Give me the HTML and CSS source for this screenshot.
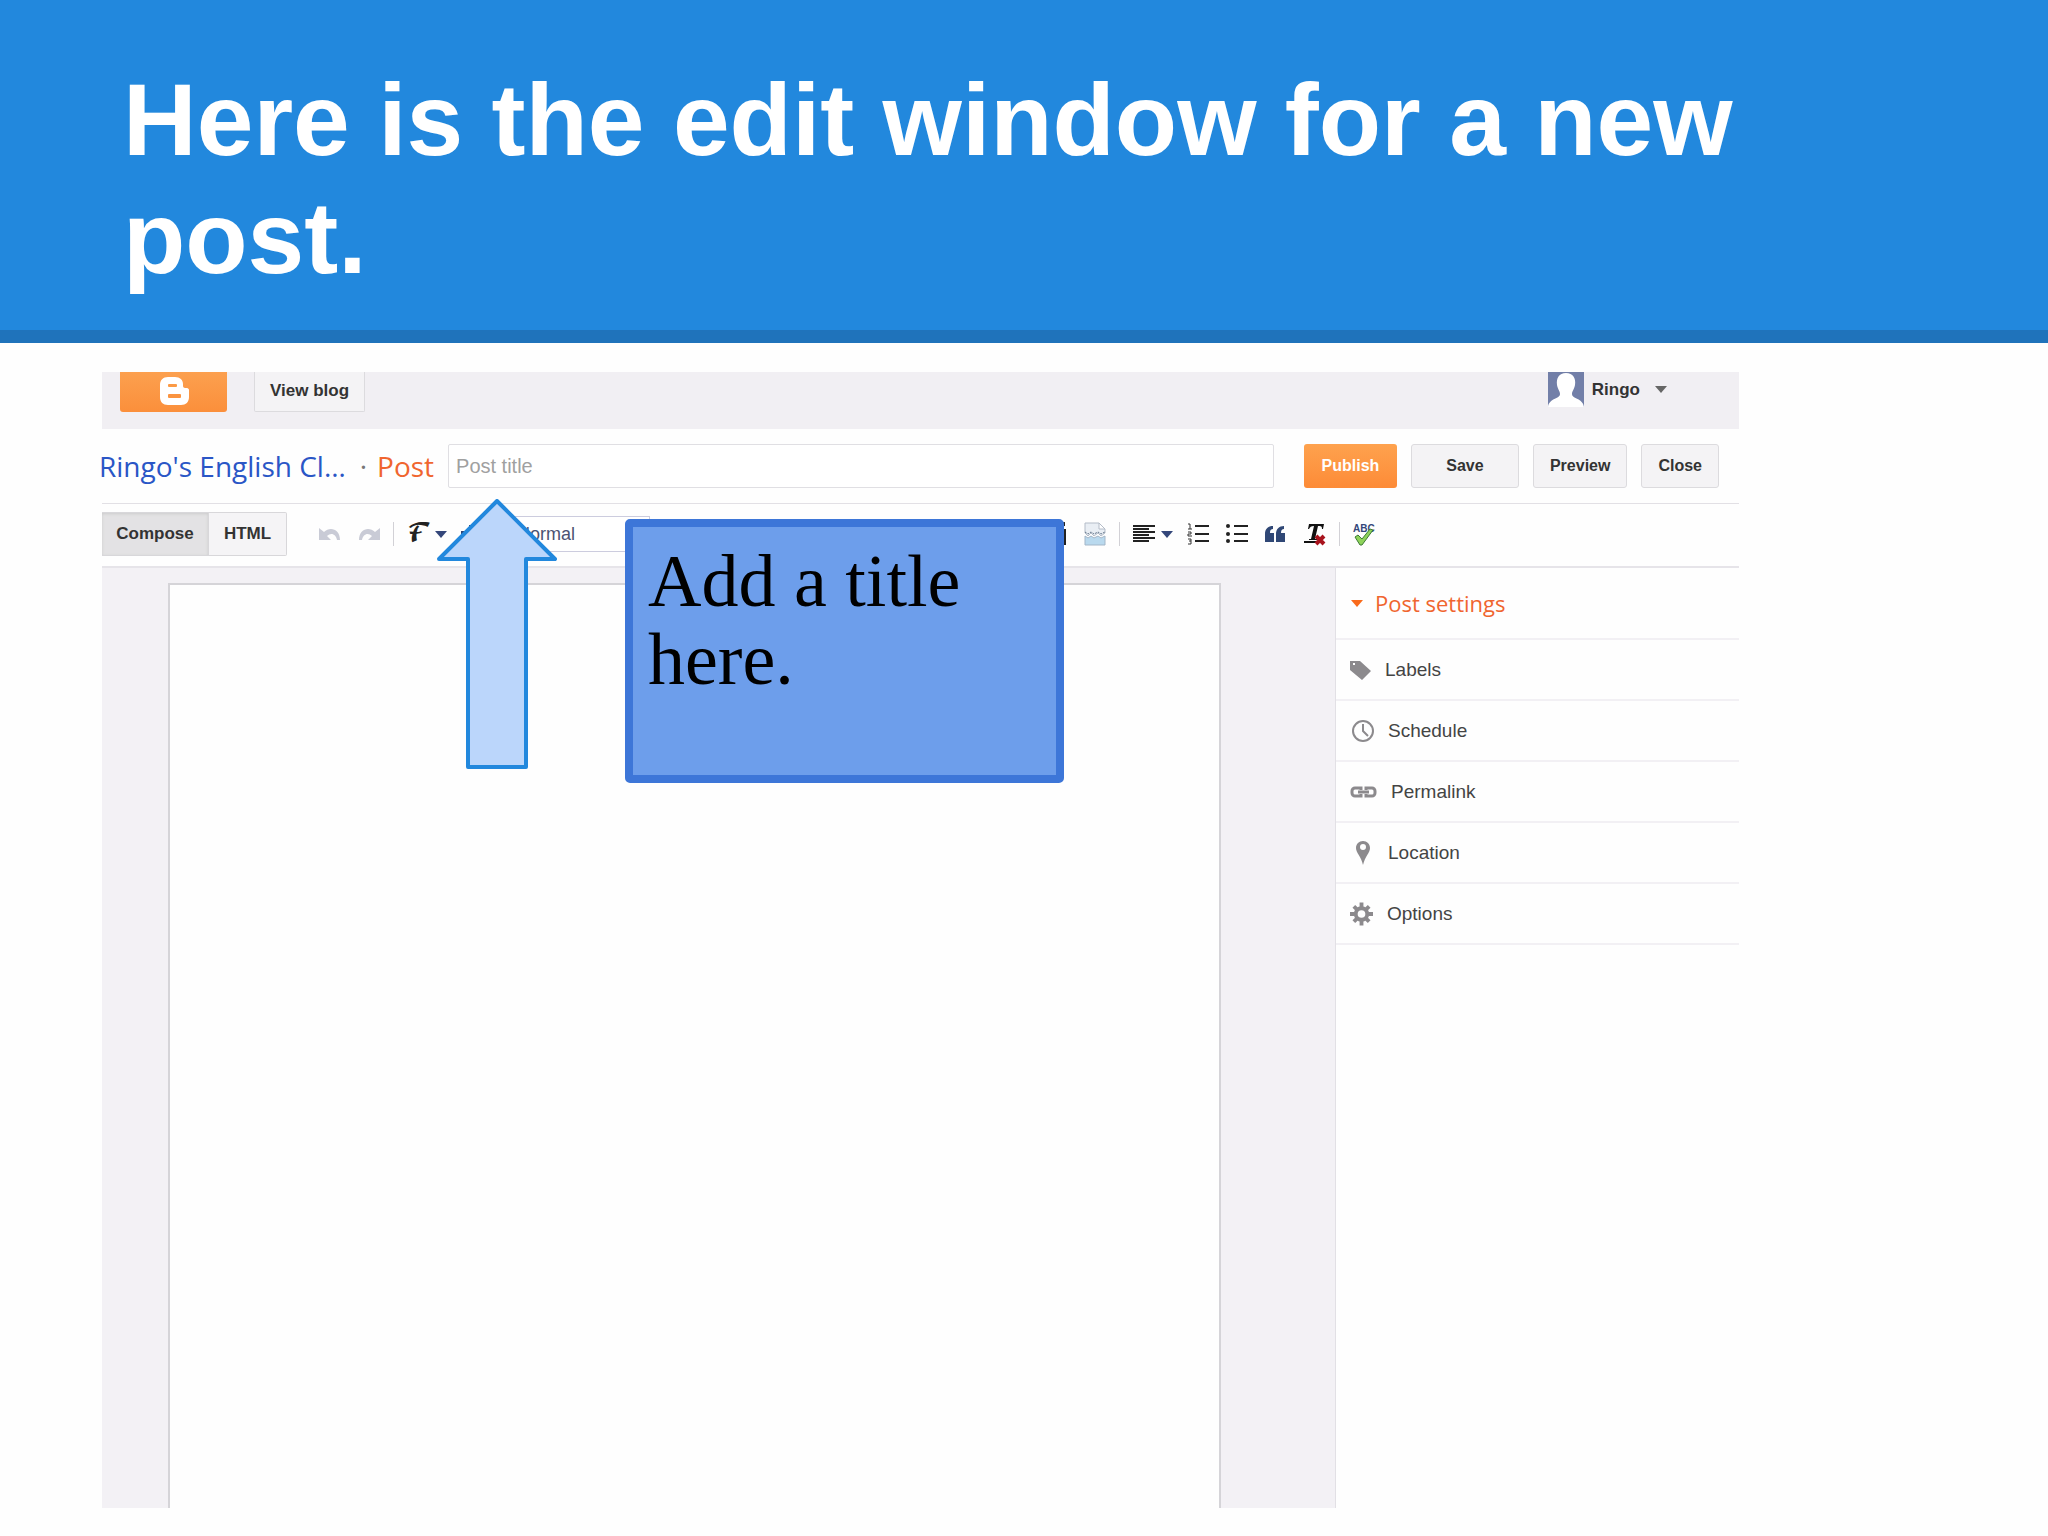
FILE: index.html
```html
<!DOCTYPE html>
<html lang="en">
<head>
  <meta charset="UTF-8" />
  <meta name="viewport" content="width=device-width, initial-scale=1.0" />
  <title>Here is the edit window for a new post.</title>
  <link rel="stylesheet" href="styles.css">
</head>
<body>
  <header class="slide-header">
    <h1>Here is the edit window for a new post.</h1>
  </header>

  <main class="app">
    <div class="topbar">
      <button class="logo" aria-label="Blogger">
        <svg width="30" height="30" viewBox="0 0 30 30">
          <path fill="#fff" d="M9 1h7c5 0 8 3 8 7v2c0 1 1 2 2 2h2c1 0 2 1 2 2v7c0 5-3 8-8 8H9c-5 0-8-3-8-8V9c0-5 3-8 8-8z"/>
          <rect x="9" y="8" width="9" height="3" rx="1" fill="#fb9a45"/>
          <rect x="9" y="18" width="13" height="4" rx="1" fill="#fb9440"/>
        </svg>
      </button>
      <button class="btn view-blog">View blog</button>
      <button class="user">
        <svg width="36" height="35" viewBox="0 0 36 35">
          <rect width="36" height="35" fill="#727fa8"/>
          <path fill="#fff" d="M18 1c7 0 10 5 9 12-1 5-3 6-3 9 0 5 11 4 12 13H0c1-9 12-8 12-13 0-3-2-4-3-9C8 6 11 1 18 1z"/>
        </svg>
        <span>Ringo</span>
        <i class="caret caret-gray"></i>
      </button>
    </div>

    <div class="titlebar">
      <a class="blog-name" href="#">Ringo's English Cl…</a>
      <span class="dot">·</span>
      <label class="post-label" for="postTitle">Post</label>
      <input id="postTitle" class="post-title" type="text" placeholder="Post title" />
      <div class="actions">
        <button class="btn publish">Publish</button>
        <button class="btn save">Save</button>
        <button class="btn">Preview</button>
        <button class="btn">Close</button>
      </div>
    </div>

    <div class="toolbar">
      <div class="modes">
        <button class="mode active">Compose</button>
        <button class="mode">HTML</button>
      </div>
      <button class="tool" aria-label="Undo">
        <svg width="22" height="24" viewBox="0 0 22 24"><path d="M0 6v12h12l-4-4c4-4 9-2 10 4h3C21 7 11 4 5 10z" fill="#c9cbd6"/></svg>
      </button>
      <button class="tool" aria-label="Redo">
        <svg width="22" height="24" viewBox="0 0 22 24"><path d="M22 6v12H10l4-4C10 10 5 12 4 18H1C1 7 11 4 17 10z" fill="#c9cbd6"/></svg>
      </button>
      <span class="sep"></span>
      <button class="tool drop" aria-label="Font">
        <span class="font-glyph">𝓕</span>
        <i class="caret"></i>
      </button>
      <button class="tool" aria-label="Font size">
        <svg width="35" height="24" viewBox="0 0 35 24"><path d="M0 9h9v3H6v9H3v-9H0zM8 3h15v3h-6v15h-3V6H8zM26 11h9l-4 5z" fill="#2d4373"/></svg>
      </button>
      <select class="format" aria-label="Paragraph format">
        <option>Normal</option>
      </select>
      <div class="inserts">
        <button class="tool" aria-label="Insert video">
          <svg width="22" height="24" viewBox="0 0 22 24"><path d="M1 7h20v16H1zM1 2l19-2v4L1 6z" fill="#222"/><path d="M14 1l3 3M7 2l3 3" stroke="#fff" stroke-width="2"/></svg>
        </button>
      </div>
      <button class="tool" aria-label="Insert jump break">
        <svg width="22" height="24" viewBox="0 0 22 24">
          <path d="M1 1h14l6 6v4l-4 3-3-3-4 3-3-3-3 3-3-3z" fill="#e9eef4" stroke="#b4bcc8"/>
          <path d="M15 1v6h6z" fill="#fff" stroke="#b4bcc8"/>
          <path d="M1 14l3 2 3-2 3 2 4-2 3 2 4-2v9H1z" fill="#b9d9ee" stroke="#a3b6c8"/>
          <path d="M1 10l3 2 3-2 3 2 4-2 3 2 4-2" fill="none" stroke="#66788c" stroke-dasharray="2 1"/>
        </svg>
      </button>
      <span class="sep"></span>
      <button class="tool drop" aria-label="Alignment">
        <svg width="22" height="24" viewBox="0 0 22 24"><path d="M0 4h22M0 7h16M0 10h22M0 13h16M0 16h22M0 19h16" stroke="#222" stroke-width="2"/></svg>
        <i class="caret"></i>
      </button>
      <button class="tool" aria-label="Numbered list">
        <svg width="22" height="24" viewBox="0 0 22 24"><path d="M8 4h14M8 12h14M8 19h14" stroke="#222" stroke-width="2"/><path d="M1 2h2v5M1 7h4M1 10h3v2H1v2h4M1 17h3v5H1M2 19h2" fill="none" stroke="#333"/></svg>
      </button>
      <button class="tool" aria-label="Bulleted list">
        <svg width="22" height="24" viewBox="0 0 22 24"><path d="M8 4h14M8 12h14M8 19h14" stroke="#222" stroke-width="2"/><g fill="#222"><circle cx="2" cy="4" r="2"/><circle cx="2" cy="12" r="2"/><circle cx="2" cy="19" r="2"/></g></svg>
      </button>
      <button class="tool" aria-label="Quote">
        <svg width="22" height="24" viewBox="0 0 22 24"><path d="M8 4v3c-2 0-3 1-3 4h4v9H0v-8c0-5 3-8 8-8zM19 4v3c-2 0-3 1-3 4h4v9h-9v-8c0-5 3-8 8-8z" fill="#2f4775"/></svg>
      </button>
      <button class="tool" aria-label="Remove formatting">
        <svg width="22" height="24" viewBox="0 0 22 24"><path d="M5 2h15l-1 5h-1c0-3-1-3-4-3l-3 13h2v1H5v-1h2l3-13c-3 0-4 1-5 3H4zM0 19h12v2H0z" fill="#111"/><path d="M12 14l8 8M20 14l-8 8" stroke="#a8131d" stroke-width="4"/></svg>
      </button>
      <span class="sep"></span>
      <button class="tool" aria-label="Check spelling">
        <svg width="24" height="24" viewBox="0 0 24 24"><text class="abc" x="0" y="10">ABC</text><path d="M2 15l3-2 4 4 8-10 3 1L9 23H7z" fill="#8ed35a" stroke="#3d7a35"/></svg>
      </button>
    </div>

    <div class="workspace">
      <section class="editor">
        <div class="page"></div>
      </section>
      <aside class="settings">
        <h2><i class="caret caret-orange"></i>Post settings</h2>
        <ul>
          <li><a href="#">
            <svg width="21" height="24" viewBox="0 0 21 24"><path fill-rule="evenodd" d="M0 3h10l11 10-9 9L0 12zM3 5v2h2V5z" fill="#8c8a8d"/></svg>
            Labels</a></li>
          <li><a href="#">
            <svg width="24" height="24" viewBox="0 0 24 24"><circle cx="13" cy="12" r="10" fill="none" stroke="#8c8a8d" stroke-width="2"/><path d="M13 5v7l5 5" fill="none" stroke="#8c8a8d" stroke-width="2"/></svg>
            Schedule</a></li>
          <li><a href="#">
            <svg width="27" height="24" viewBox="0 0 27 24"><path d="M11 10V8H5a3 3 0 0 0-3 3v2a3 3 0 0 0 3 3h6v-2M16 10V8h6a3 3 0 0 1 3 3v2a3 3 0 0 1-3 3h-6v-2M8 12h11" fill="none" stroke="#8c8a8d" stroke-width="3"/></svg>
            Permalink</a></li>
          <li><a href="#">
            <svg width="24" height="24" viewBox="0 0 24 24"><path fill-rule="evenodd" d="M13 0c4 0 7 3 7 7 0 5-5 8-7 17-2-9-7-12-7-17 0-4 3-7 7-7zM13 3a3 3 0 1 0 0 6 3 3 0 1 0 0-6z" fill="#8c8a8d"/></svg>
            Location</a></li>
          <li><a href="#">
            <svg width="23" height="24" viewBox="0 0 24 24"><circle cx="12" cy="12" r="6" fill="none" stroke="#8c8a8d" stroke-width="4"/><path d="M12 0v5M12 19v5M0 12h5M19 12h5M4 4l3 3M17 17l3 3M20 4l-3 3M7 17l-3 3" stroke="#8c8a8d" stroke-width="4"/></svg>
            Options</a></li>
        </ul>
      </aside>
    </div>

    <!-- notes on top of the editor -->
    <svg class="arrow" width="120" height="272" viewBox="0 0 120 272">
      <path d="M60 2L118 60H89V268H31V60H2z" fill="#bbd6fb" stroke="#2288dd" stroke-width="4" stroke-linejoin="round"/>
    </svg>
    <div class="callout">Add a title here.</div>
  </main>
</body>
</html>
```
FILE: styles.css
```css
:root {
  --blue: #2288dd;
  --blue-dark: #1f73bb;
  --orange: #f0652f;
  --gray: #f1eff3;
  --line: #e2e0e5;
}

* {
  box-sizing: border-box;
}

body {
  margin: 0;
  min-height: 100vh;
  display: flex;
  flex-direction: column;
  background: #fefefe;
  color: #333;
  font-family: Arial, "Liberation Sans", sans-serif;
}

button, select, input {
  font-family: inherit;
  margin: 0;
}

svg {
  display: block;
  flex: none;
}

.slide-header {
  background: var(--blue);
  border-bottom: 13px solid var(--blue-dark);
  padding: 61px 123px 33px;
}

h1 {
  margin: 0;
  color: #fff;
  font-size: 102px;
  line-height: 118px;
}

.app {
  position: relative;
  flex: 1;
  display: flex;
  flex-direction: column;
  margin: 29px 309px 28px 102px;
}

/* top bar */
.topbar {
  display: flex;
  align-items: flex-start;
  height: 57px;
  padding: 0 72px 0 18px;
  background: var(--gray);
}

.btn {
  height: 44px;
  padding: 0 16px;
  border: 1px solid #dcdbde;
  border-radius: 3px;
  background: #f4f3f5;
  color: #333;
  font-size: 16px;
  font-weight: bold;
}

.logo {
  display: flex;
  justify-content: center;
  width: 107px;
  height: 40px;
  padding: 4px 0 0;
  border: 0;
  border-radius: 0 0 3px 3px;
  background: linear-gradient(#fca04f, #fb8f3b);
}

.view-blog {
  height: 40px;
  margin-left: 27px;
  padding: 0 15px 2px;
  border-top: 0;
  border-radius: 0 0 2px 2px;
  font-size: 17px;
}

.user {
  display: flex;
  align-items: center;
  margin-left: auto;
  padding: 0;
  border: 0;
  background: none;
  color: #333;
  font-size: 17px;
  font-weight: bold;
}

.user span {
  margin: 0 15px 0 8px;
}

.caret {
  flex: none;
  border: 6px solid transparent;
  border-top: 7px solid #34477a;
  border-bottom: 0;
}

.caret-gray {
  border-top-color: #666;
}

.caret-orange {
  border-top-color: #f96a1b;
}

/* title row */
.titlebar {
  display: flex;
  align-items: center;
  height: 75px;
  padding-right: 20px;
  border-bottom: 1px solid var(--line);
  font-family: "Open Sans", sans-serif;
  font-size: 28px;
  line-height: 36px;
}

.blog-name {
  margin-left: -3px;
  color: #2a56c6;
  text-decoration: none;
  white-space: nowrap;
}

.dot {
  margin: 0 10px 0 14px;
  color: #777;
}

.post-label {
  color: var(--orange);
}

.post-title {
  flex: 1;
  min-width: 0;
  height: 44px;
  margin-left: 14px;
  padding: 0 7px;
  border: 1px solid #e0dfe3;
  border-radius: 2px;
  background: #fff;
  font-family: Arial, "Liberation Sans", sans-serif;
  font-size: 20px;
}

.post-title::placeholder {
  color: #a0a0a0;
}

.actions {
  display: flex;
  gap: 14px;
  margin-left: 30px;
  font-family: Arial, "Liberation Sans", sans-serif;
}

.publish {
  width: 93px;
  border: 0;
  background: linear-gradient(#fea24e, #fd8b37);
  color: #fff;
}

.save {
  width: 108px;
}

/* toolbar */
.toolbar {
  display: flex;
  align-items: center;
  gap: 17px;
  height: 64px;
  padding-bottom: 2px;
  border-bottom: 2px solid #e6e4e9;
}

.modes {
  display: flex;
  margin-right: 15px;
}

.mode {
  width: 78px;
  height: 44px;
  padding: 0;
  border: 1px solid #d8d7da;
  border-left: 0;
  border-radius: 0 2px 2px 0;
  background: #f5f4f6;
  color: #333;
  font-size: 17px;
  font-weight: bold;
}

.mode.active {
  width: 107px;
  border-radius: 0;
  background: #e3e2e4;
  box-shadow: inset 0 1px 3px #ccc;
}

.tool {
  flex: none;
  padding: 0;
  border: 0;
  background: none;
}

.drop {
  display: flex;
  align-items: center;
  gap: 6px;
  margin-right: -3px;
}

.font-glyph {
  width: 22px;
  color: #222;
  font-family: "DejaVu Math TeX Gyre", "DejaVu Serif", serif;
  font-size: 24px;
  line-height: 24px;
}

.sep {
  flex: none;
  width: 1px;
  height: 24px;
  margin: 0 -4px;
  background: #d2d1d6;
}

.format {
  appearance: none;
  flex: none;
  width: 137px;
  height: 36px;
  padding: 0 3px;
  border: 1px solid #ccccde;
  border-radius: 0;
  background: #fff;
  color: #4b5272;
  font-size: 18px;
}

.inserts {
  display: flex;
  flex: none;
  justify-content: flex-end;
  width: 400px;
}

.abc {
  fill: #34477a;
  font-size: 10px;
  font-weight: bold;
}

/* editor and sidebar */
.workspace {
  flex: 1;
  display: flex;
}

.editor {
  flex: 1;
  display: flex;
  padding: 15px 114px 0 66px;
  background: #f3f1f5;
}

.page {
  flex: 1;
  border: 2px solid #d5d4d8;
  border-bottom: 0;
  background: #fefefe;
}

.settings {
  width: 404px;
  border-left: 1px solid var(--line);
}

.settings h2 {
  display: flex;
  align-items: center;
  gap: 12px;
  height: 72px;
  margin: 0;
  padding-left: 15px;
  border-bottom: 2px solid #f2f0f4;
  color: var(--orange);
  font-family: "Open Sans", sans-serif;
  font-size: 22px;
  font-weight: normal;
}

.settings ul {
  margin: 0;
  padding: 0;
  list-style: none;
}

.settings a {
  display: flex;
  align-items: center;
  gap: 14px;
  height: 61px;
  padding-left: 14px;
  border-bottom: 2px solid #f2f0f4;
  color: #444;
  font-size: 19px;
  text-decoration: none;
}

/* notes */
.arrow {
  position: absolute;
  top: 127px;
  left: 335px;
}

.callout {
  position: absolute;
  top: 147px;
  left: 523px;
  width: 439px;
  height: 264px;
  padding: 15px;
  border: 8px solid #3d76d8;
  border-radius: 5px;
  background: #6d9eeb;
  color: #000;
  font-family: Georgia, "Liberation Serif", serif;
  font-size: 74px;
  line-height: 78px;
}
```
